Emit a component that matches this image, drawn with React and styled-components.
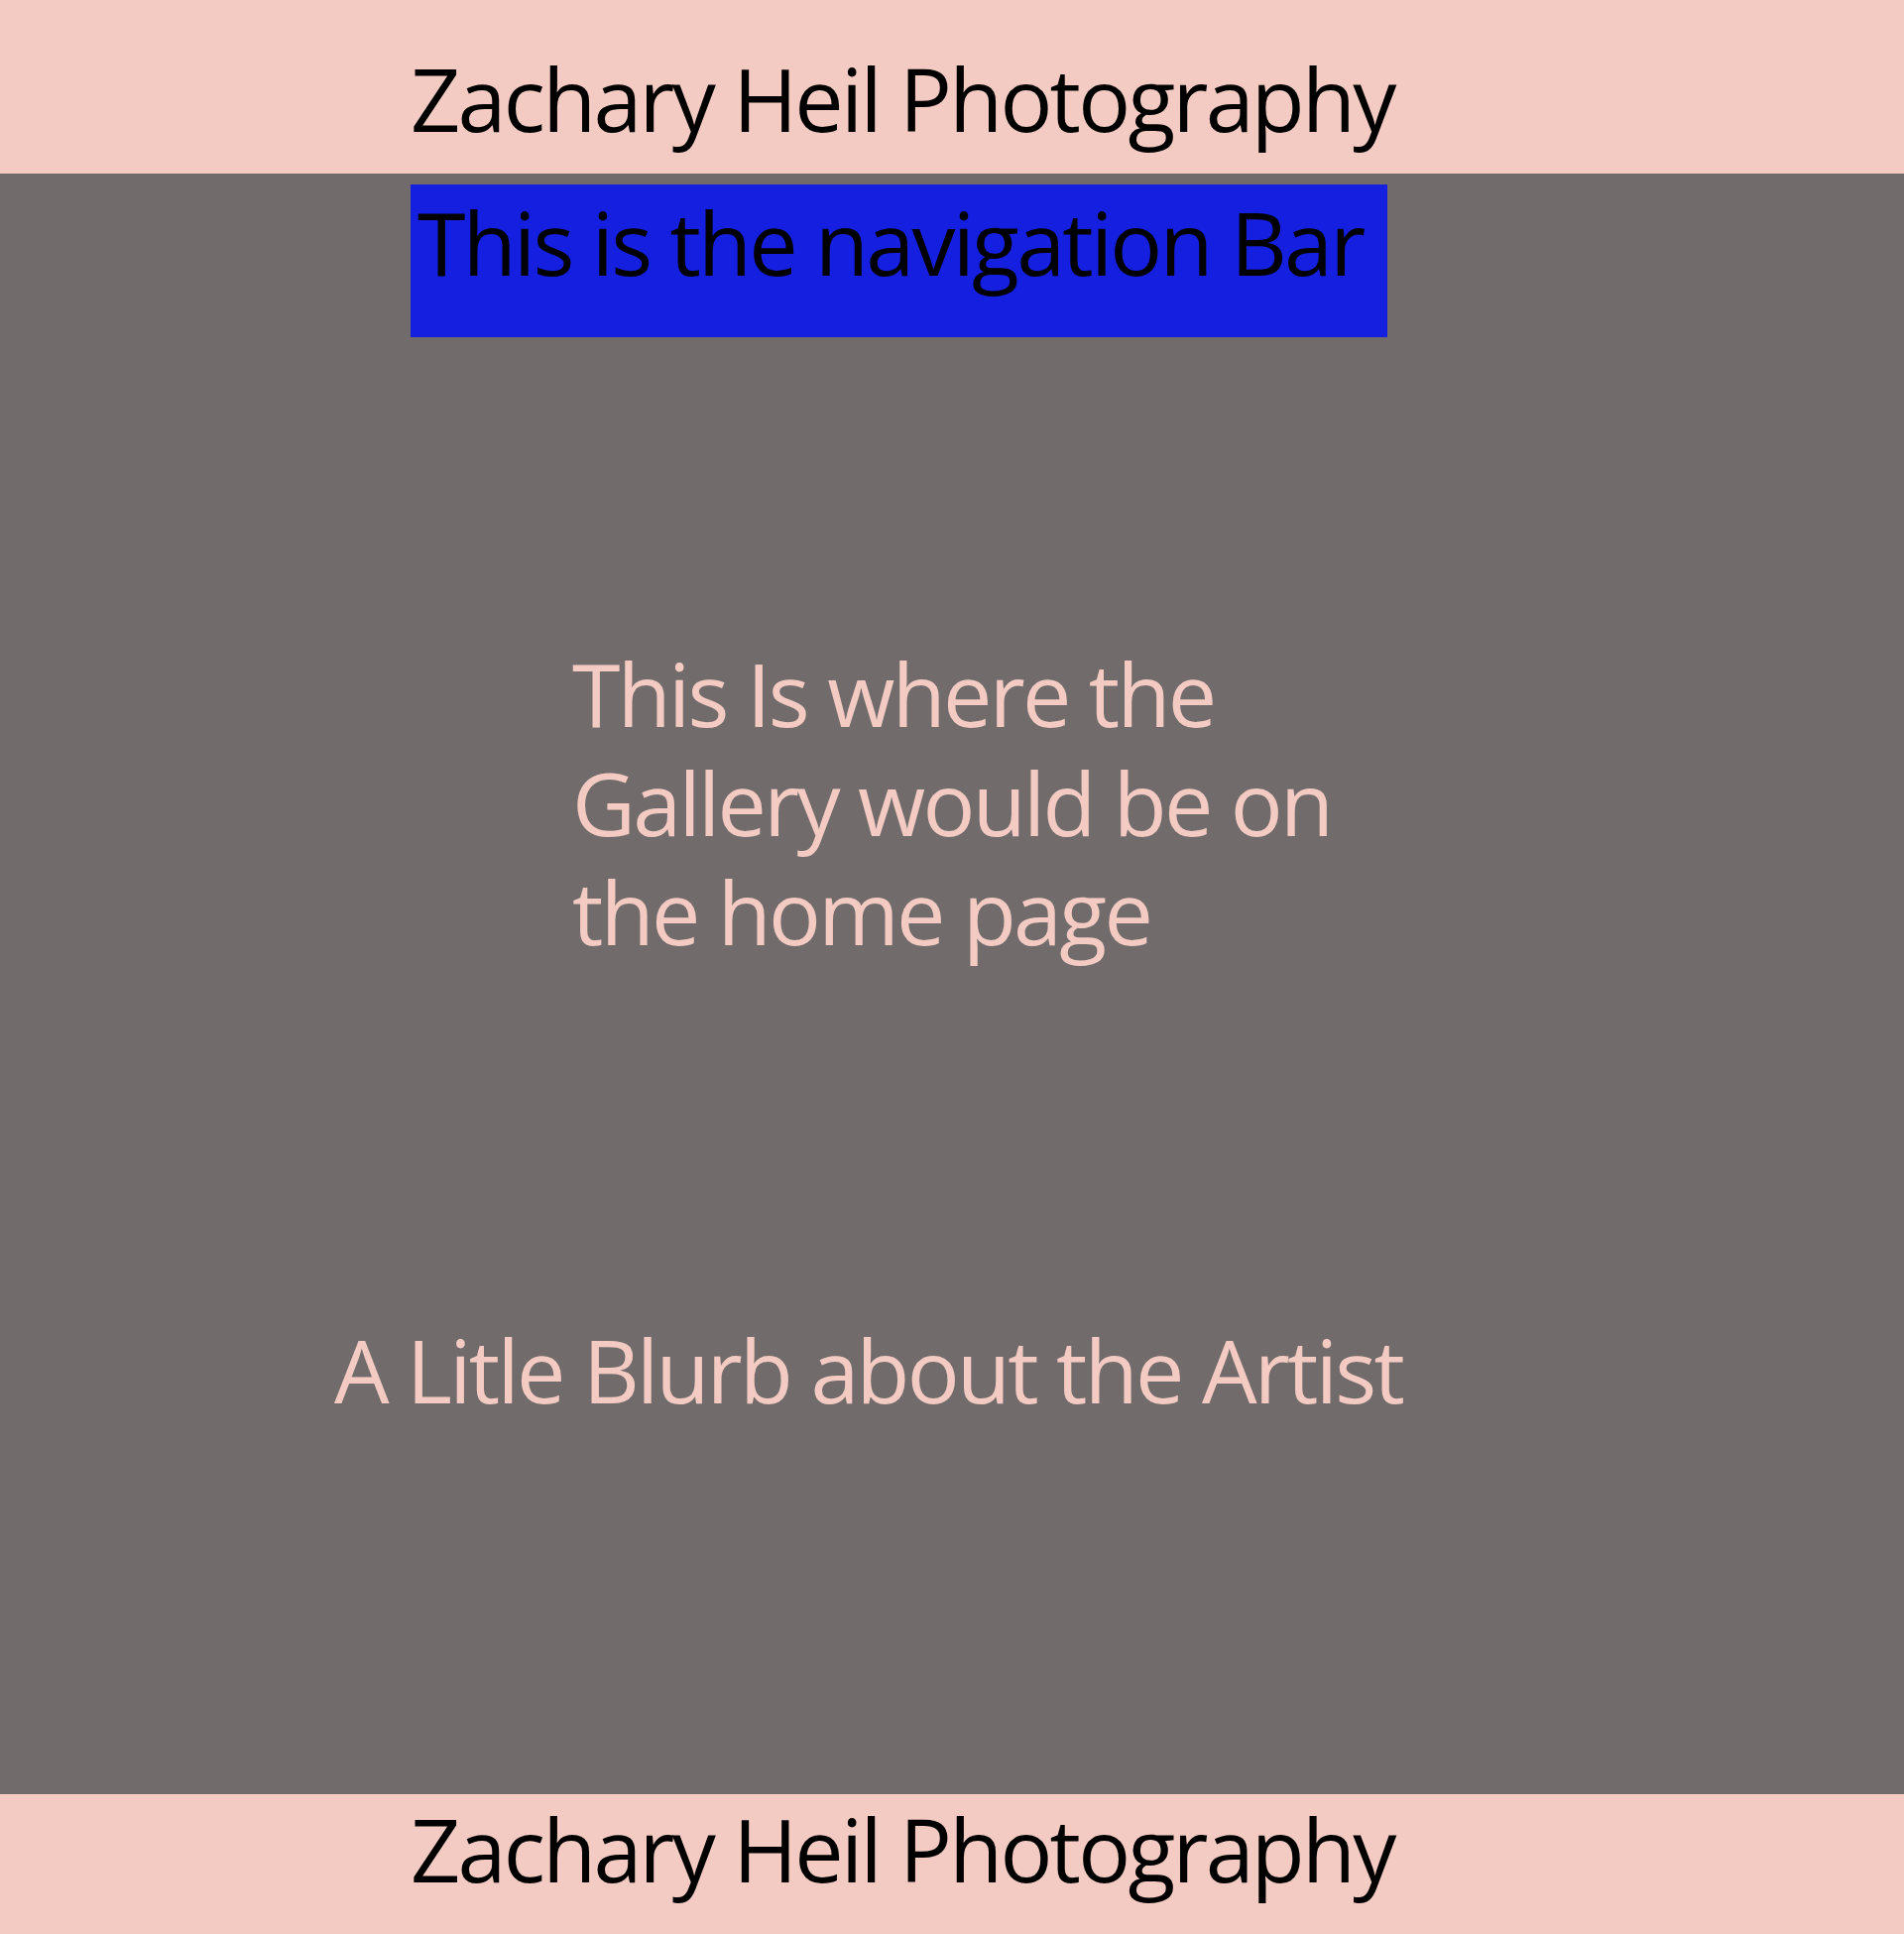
import React from 'react';
import styled, { createGlobalStyle } from 'styled-components';

const pink = '#f3cbc2';
const grey = '#716b6b';
const blue = '#141fe0';

const GlobalStyle = createGlobalStyle`
    html, body {
        margin: 0;
        padding: 0;
        background: ${grey};
    }
    body {
        font-family: "Open Sans", "Noto Sans", sans-serif;
    }
`;

const Band = styled.header`
    box-sizing: border-box;
    height: ${props => props.$height}px;
    padding: ${props => props.$top}px 0 0 414px;
    background: ${pink};
    color: black;
    font-size: 88px;
    line-height: 110px;
    letter-spacing: -2.75px;
    white-space: nowrap;
`;

const Main = styled.main`
    display: flex;
    flex-direction: column;
    height: 1634px;
    background: ${grey};
`;

const NavBar = styled.nav`
    box-sizing: border-box;
    width: 985px;
    height: 154px;
    margin: 11px 0 0 414px;
    padding: 3px 0 0 7px;
    background: ${blue};
    color: black;
    font-size: 88px;
    line-height: 110px;
    letter-spacing: -2.75px;
    white-space: nowrap;
`;

const Copy = styled.p`
    margin: ${props => props.$top}px 0 0 ${props => props.$left}px;
    width: ${props => props.$width}px;
    color: ${pink};
    font-size: 88px;
    line-height: 110px;
    letter-spacing: -2.7px;
`;

const App = () => <>
    <GlobalStyle />
    <Band $height={175} $top={44}>Zachary Heil Photography</Band>
    <Main>
        <NavBar>This is the navigation Bar</NavBar>
        <Copy $top={304} $left={577} $width={800}>
            This Is where the<br />Gallery would be on<br />the home page
        </Copy>
        <Copy $top={352} $left={337} $width={1200}>A Litle Blurb about the Artist</Copy>
    </Main>
    <Band as="footer" $height={141} $top={0}>Zachary Heil Photography</Band>
</>;

export default App;
